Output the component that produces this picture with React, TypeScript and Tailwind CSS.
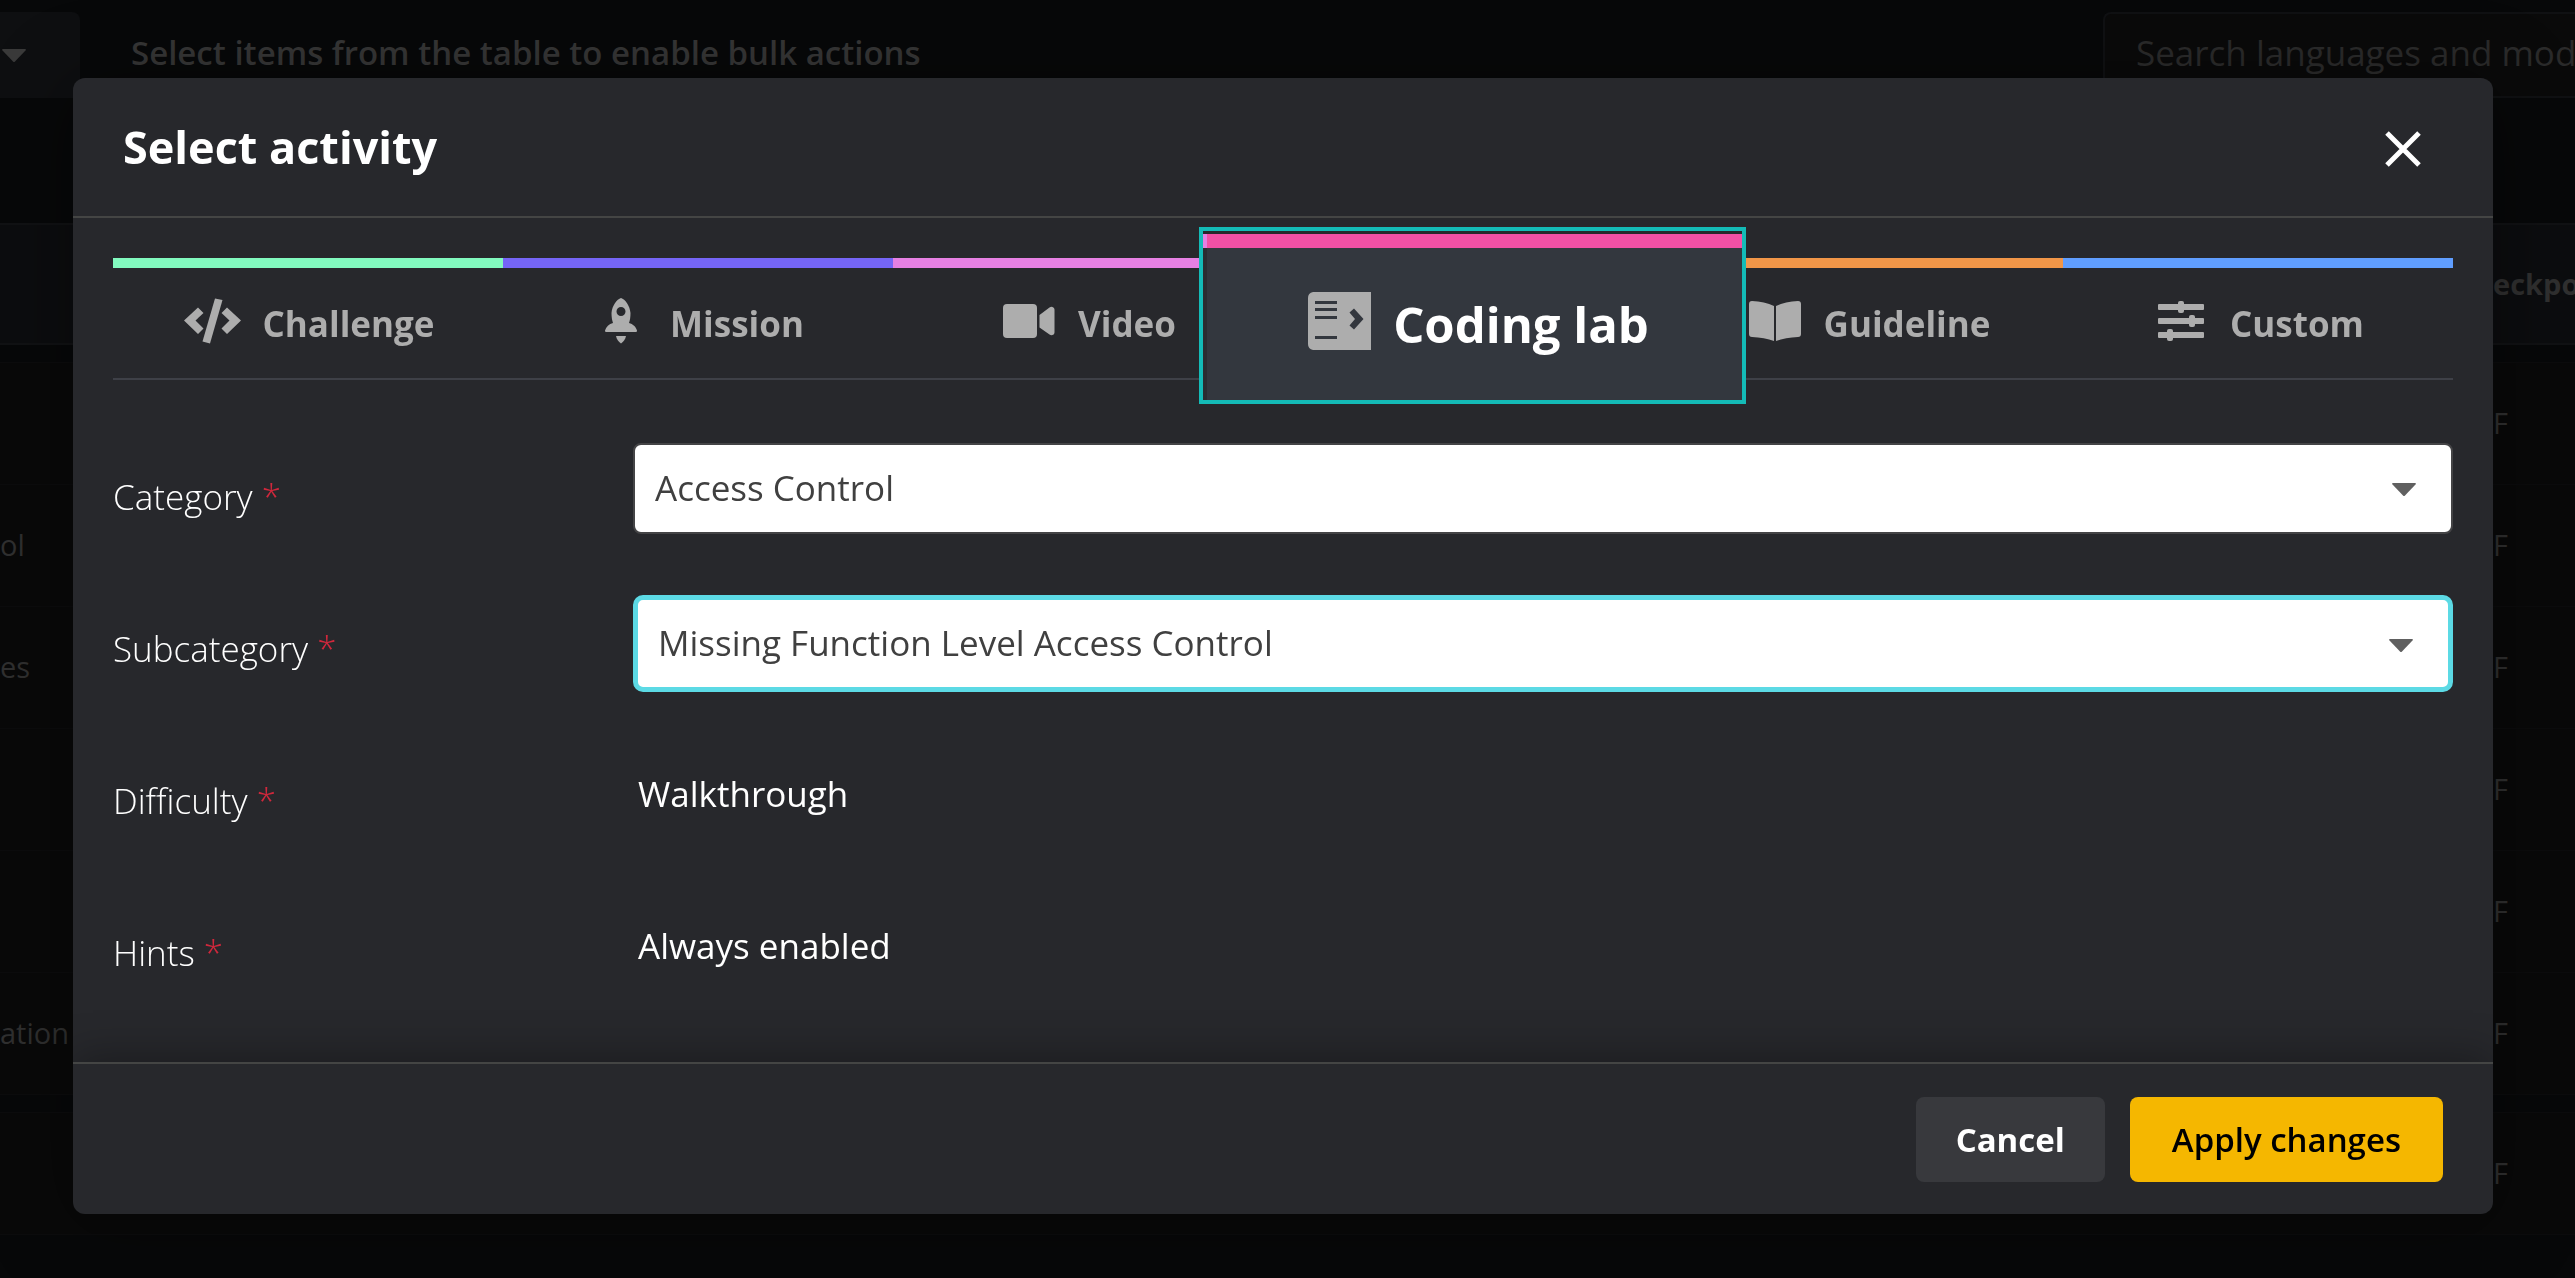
import React from "react";
import { useState } from "react";

interface IconProps {
  className?: string;
}

const CodeIcon: React.FC<IconProps> = ({ className }) => (
  <svg className={className} width="57" height="46" viewBox="0 0 57 46" fill="currentColor">
    <path d="M14 9.5 19.500 15 11.500 22.500 19.500 30.500 14 36 0 22.500Z" />
    <path d="M43 9.500 37.500 15 45.500 22.500 37.500 30.500 43 36 57 22.500Z" />
    <path d="M31 0.500 38.500 2 26 45.500 18.500 43.500Z" />
  </svg>
);

const RocketIcon: React.FC<IconProps> = ({ className }) => (
  <svg className={className} width="32" height="46" viewBox="0 0 32 46" fill="currentColor">
    <path
      fillRule="evenodd"
      d="M16 0C20 1 25 8 25.500 15 25.500 19 25 22 24 25 28 26 31 29 32 32.500 32 33.500 31.500 34 30.500 34H1.500C.5 34 0 33.500 0 32.500 1 29 4 26 8 25 7 22 6.500 19 6.500 15 7 8 12 1 16 0ZM16 9A4.500 4.500 0 1 0 16 18 4.500 4.500 0 1 0 16 9Z"
    />
    <path d="M11 38H21C20.500 41 18.500 44 16 45.500 13.500 44 11.500 41 11 38Z" />
  </svg>
);

const VideoIcon: React.FC<IconProps> = ({ className }) => (
  <svg className={className} width="52" height="34" viewBox="0 0 52 34" fill="currentColor">
    <rect width="34" height="34" rx="4" />
    <path d="M36.500 11 46.500 3.500Q48 2.500 49.500 3 51.500 3.500 51.500 5.500V28.500Q51.500 30.500 49.500 31 48 31.500 46.500 30.500L36.500 23.500Z" />
  </svg>
);

const LabIcon: React.FC<IconProps> = ({ className }) => (
  <svg className={className} width="63" height="58" viewBox="0 0 63 58">
    <path fill="#adadad" d="M5 0H63V58H5Q0 57 0 52V6Q0 1 5 0Z" />
    <path fill="#33373e" d="M7 9H29V12H7ZM7 16H29V19H7ZM7 24H29V27H7ZM7 44H29V47H7Z" />
    <path fill="#33373e" d="M41.500 20.500 46 16.500 55.500 27 46 37.500 41.500 33.500 47 27Z" />
  </svg>
);

const BookIcon: React.FC<IconProps> = ({ className }) => (
  <svg className={className} width="52" height="40" viewBox="0 0 52 40" fill="currentColor">
    <path d="M25 5C19 2 11 .5 3 0Q0 0 0 3V33Q0 36 3 36C11 36.500 19 37.500 25 40Z" />
    <path d="M27 5C33 2 41 .5 49 0Q52 0 52 3V33Q52 36 49 36C41 36.500 33 37.500 27 40Z" />
  </svg>
);

const SlidersIcon: React.FC<IconProps> = ({ className }) => (
  <svg className={className} width="46" height="40" viewBox="0 0 46 40" fill="currentColor">
    <rect y="3" width="46" height="6" rx="1" />
    <rect y="17" width="46" height="6" rx="1" />
    <rect y="31" width="46" height="6" rx="1" />
    <rect x="20" y="0" width="6" height="12" rx="2" />
    <rect x="31" y="14" width="6" height="12" rx="2" />
    <rect x="9" y="28" width="6" height="12" rx="2" />
  </svg>
);

const Caret: React.FC<IconProps> = ({ className }) => (
  <svg className={className} width="24" height="13" viewBox="0 0 24 13" fill="currentColor">
    <path d="M1 0H23Q24.500 0 23.500 1.500L13 12.500Q12 13.500 11 12.500L.5 1.500Q-.5 0 1 0Z" />
  </svg>
);

const tabs = [
  { id: "challenge", label: "Challenge", bar: "border-[#82fabf]", Icon: CodeIcon },
  { id: "mission", label: "Mission", bar: "border-[#7565f6]", Icon: RocketIcon },
  { id: "video", label: "Video", bar: "border-[#e680e3]", Icon: VideoIcon },
  { id: "lab", label: "Coding lab", bar: "border-[#f250a5]", Icon: LabIcon },
  { id: "guideline", label: "Guideline", bar: "border-[#f19648]", Icon: BookIcon },
  { id: "custom", label: "Custom", bar: "border-[#609eff]", Icon: SlidersIcon },
];

const rows = ["", "ol", "es", "", "", "ation"];

// dimmed page behind the dialog
const Backdrop = () => (
  <div className="h-screen overflow-hidden bg-[#070809] pt-3 text-[#303030]">
    <div className="flex h-[86px] items-center">
      <button type="button" aria-label="Bulk actions" className="flex h-full w-20 items-center rounded-tr-lg bg-[#0e0f11] pl-0.5 text-[#3a3a3a]">
        <Caret />
      </button>
      <p className="ml-[51px] flex-1 pb-1 text-[33px] font-semibold text-[#363636]">Select items from the table to enable bulk actions</p>
      <input
        type="text"
        aria-label="Search"
        placeholder="Search languages and mod"
        className="h-full w-[472px] rounded-l-lg border-2 border-r-0 border-[#101113] bg-[#0a0a0a] pb-1.5 pl-[31px] text-[35px] placeholder:text-[#2b2b2b]"
      />
    </div>
    <table className="mt-[125px] w-full border-collapse text-left text-[29px]">
      <thead>
        <tr className="h-[120px] border-y-2 border-[#111214] bg-[#0c0d0f]">
          <th></th>
          <th className="w-[82px] max-w-[82px] overflow-hidden font-bold">eckpo</th>
        </tr>
      </thead>
      <tbody>
        <tr className="h-[18px]"><td></td><td></td></tr>
        {rows.map((text, index) => (
          <tr key={index} className="h-[122px] border-y border-[#0c0c0d] bg-[#090909]">
            <td>{text}</td>
            <td>F</td>
          </tr>
        ))}
        <tr className="h-[18px]"><td></td><td></td></tr>
        <tr className="h-[122px] border-y border-[#0c0c0d] bg-[#090909]">
          <td></td>
          <td>F</td>
        </tr>
      </tbody>
    </table>
  </div>
);

interface FieldLabelProps {
  text: string;
  htmlFor?: string;
}

const FieldLabel: React.FC<FieldLabelProps> = ({ text, htmlFor }) => (
  <label htmlFor={htmlFor} className="w-[520px] shrink-0 pt-[29px] text-[35px] leading-[49px] font-light text-white">
    {text} <span className="text-[#d0283c]">*</span>
  </label>
);

export default function App() {
  const [active, setActive] = useState("lab");
  const [category, setCategory] = useState("Access Control");
  const [subcategory, setSubcategory] = useState("Missing Function Level Access Control");

  return (
    <div className="font-['Open_Sans',sans-serif]">
      <Backdrop />

      <div className="fixed inset-0 pt-[78px] pr-[82px] pl-[73px]">
        <div
          role="dialog"
          aria-labelledby="dialog-title"
          className="flex flex-col overflow-hidden rounded-xl bg-[#27282c] shadow-[0_10px_80px_10px_rgba(0,0,0,0.3)]"
        >
          <div className="flex h-[140px] items-center justify-between border-b-2 border-[#444544] pr-[70px] pl-[50px]">
            <h1 id="dialog-title" className="text-[45px] leading-[62px] font-bold text-white">Select activity</h1>
            <button type="button" aria-label="Close" className="pt-1 text-white">
              <svg width="40" height="40" viewBox="0 0 40 40" fill="none" stroke="currentColor" strokeWidth="5">
                <path d="M4 4 36 36M36 4 4 36" />
              </svg>
            </button>
          </div>

          <div className="px-10 pt-10">
            <div role="tablist" className="grid grid-cols-6 border-b-2 border-[#3e4047]">
              {tabs.map(({ id, label, bar, Icon }) =>
                id === active ? (
                  <div key={id} className="relative">
                    {/* the selected tab is enlarged over its neighbours */}
                    <button
                      type="button"
                      role="tab"
                      aria-selected
                      className="absolute -top-[31px] -right-[73px] -left-[84px] z-10 h-[177px] border-4 border-[#14bbb7] bg-[#27282c] pt-[3px]"
                    >
                      <span className="flex h-full">
                        <span className="w-1 border-t-[14px] border-[#e680e3] bg-[#2b2d31]"></span>
                        <span className={`flex flex-1 items-center justify-center gap-[22px] border-t-[14px] bg-[#33373e] pl-2 text-[49px] leading-[68px] font-bold text-white ${bar}`}>
                          <Icon className="mb-1.5 shrink-0" />
                          {label}
                        </span>
                      </span>
                    </button>
                  </div>
                ) : (
                  <button
                    key={id}
                    type="button"
                    role="tab"
                    aria-selected={false}
                    onClick={() => setActive(id)}
                    className={`flex h-[120px] items-center justify-center gap-[22px] border-t-[10px] pt-0.5 pl-0.5 text-[35px] font-bold text-[#adadad] ${bar}`}
                  >
                    <span className="mb-1.5 flex min-w-[54px] justify-center">
                      <Icon />
                    </span>
                    {label}
                  </button>
                )
              )}
            </div>

            <div className="pt-[63px] pb-[11px]">
              <div className="flex h-[152px] items-start">
                <FieldLabel text="Category" htmlFor="category" />
                <div className="relative flex-1">
                  <select
                    id="category"
                    value={category}
                    onChange={(e) => setCategory(e.target.value)}
                    className="h-[91px] w-full appearance-none rounded-lg border-2 border-[#444446] bg-white px-5 text-[35px] text-[#404040]"
                  >
                    <option>Access Control</option>
                  </select>
                  <Caret className="pointer-events-none absolute top-10 right-[37px] text-[#606060]" />
                </div>
              </div>

              <div className="flex h-[152px] items-start">
                <FieldLabel text="Subcategory" htmlFor="subcategory" />
                <div className="relative flex-1">
                  <select
                    id="subcategory"
                    value={subcategory}
                    onChange={(e) => setSubcategory(e.target.value)}
                    className="h-[97px] w-full appearance-none rounded-[10px] border-[5px] border-[#5cdae5] bg-white px-5 text-[35px] text-[#404040]"
                  >
                    <option>Missing Function Level Access Control</option>
                  </select>
                  <Caret className="pointer-events-none absolute top-11 right-10 text-[#606060]" />
                </div>
              </div>

              <div className="flex h-[152px] items-start">
                <FieldLabel text="Difficulty" />
                <p className="ml-[5px] pt-[22px] text-[35px] leading-[49px] text-white">Walkthrough</p>
              </div>

              <div className="flex h-[152px] items-start">
                <FieldLabel text="Hints" />
                <p className="ml-[5px] pt-[22px] text-[35px] leading-[49px] text-white">Always enabled</p>
              </div>
            </div>
          </div>

          <div className="flex h-[152px] items-center justify-end gap-[25px] border-t-2 border-[#444544] pr-[50px] shadow-[0_-6px_40px_rgba(0,0,0,0.3)]">
            <button type="button" className="h-[85px] rounded-lg bg-[#38393d] px-10 pt-0.5 text-[33px] font-bold text-white">
              Cancel
            </button>
            <button type="button" className="h-[85px] rounded-lg bg-[#f5b700] px-[42px] pt-0.5 text-[33px] font-semibold text-black">
              Apply changes
            </button>
          </div>
        </div>
      </div>
    </div>
  );
}
